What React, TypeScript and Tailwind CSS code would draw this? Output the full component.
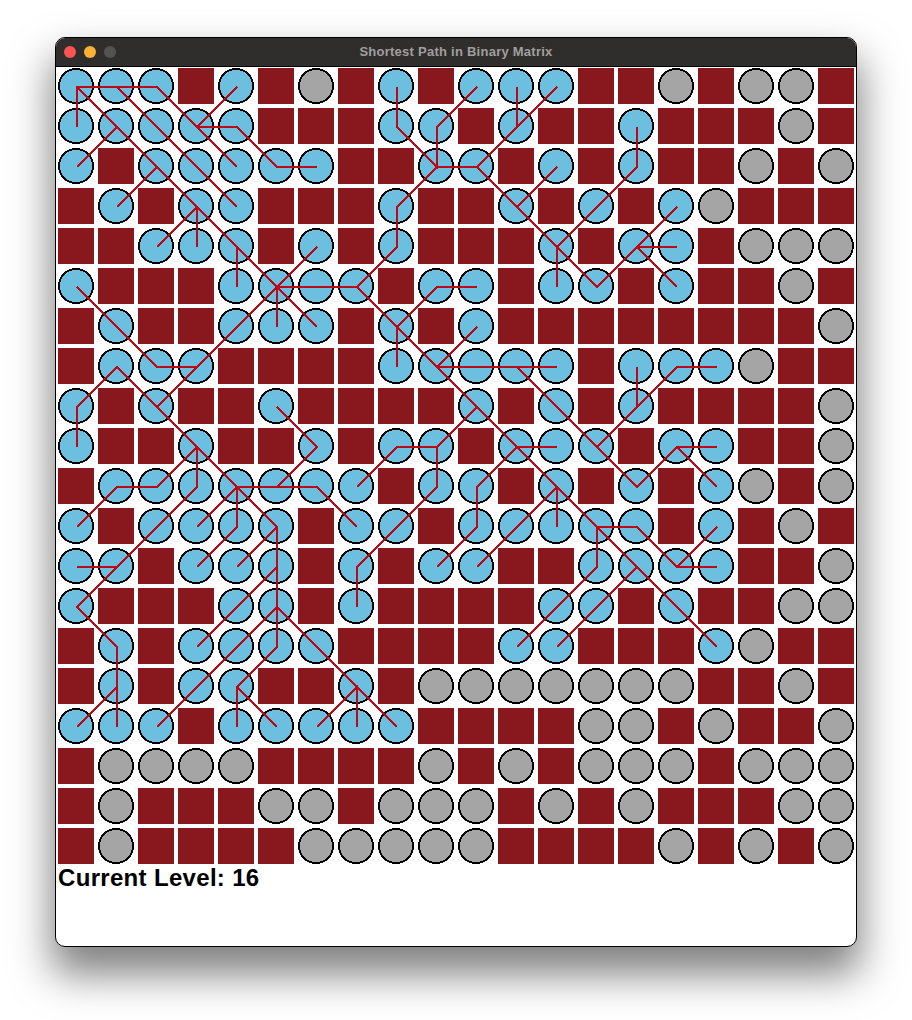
import React from "react";

const BOARD = [
  "BBBRBRGRBRBBBRRGRGGR",
  "BBBBBRRRBBRBRRBRRRGR",
  "BRBBBBBRRBBRBRBRRGRG",
  "RBRBBRRRBRRBRBRBGRRR",
  "RRBBBRBRBRRRBRBBRGGG",
  "BRRRBBBBRBBRBBRBRRGR",
  "RBRRBBBRBRBRRRRRRRRG",
  "RBBBRRRRBBBBBRBBBGRR",
  "BRBRRBRRRRBRBRBRRRRG",
  "BRRBRRBRBBRBBBRBBRRG",
  "RBBBBBBBRBBRBRBRBGRG",
  "BRBBBBRBBRBBBBBRBRGR",
  "BBRBBBRBRBBRRBBBBRRG",
  "BRRRBBRBRRRRBBRBRRGG",
  "RBRBBBBRRRRBBRRRBGRR",
  "RBRBBRRBRGGGGGGGRRGR",
  "BBBRBBBBBRRRRGGRGRRG",
  "RGGGGRRRRGRGRGGGRGGG",
  "RGRRRGGRGGGRGRGRRRGG",
  "RGRRRRGGGGGRRRRGRGRG",
];

const PATHS = [
  "0,1 0,0 2,0 4,2",
  "1,0 4,3",
  "3,1 4,0",
  "3,1 4,1 5,2 6,2",
  "0,2 1,1",
  "0,0 5,5",
  "1,3 2,2",
  "2,4 3,3",
  "3,3 3,4",
  "4,4 4,5",
  "5,5 6,4",
  "5,5 7,5",
  "5,5 5,6",
  "5,5 6,6",
  "5,5 3,7 2,7 0,5",
  "3,7 2,8",
  "0,9 0,8 1,7 3,9",
  "3,9 4,10",
  "3,9 2,10 1,10 0,11",
  "3,9 3,10 0,13 1,14 1,16",
  "0,16 1,15",
  "0,12 1,12",
  "4,10 6,10 7,11",
  "5,10 6,9 5,8",
  "3,11 4,10",
  "4,10 4,11 3,12",
  "4,10 5,11 4,12",
  "5,11 5,14 4,15 4,16",
  "4,15 5,16",
  "3,14 5,12",
  "2,16 5,13 8,16",
  "6,16 7,15 7,16",
  "7,5 8,4 8,3 9,2",
  "8,0 8,1 9,2 9,1 10,0",
  "9,2 10,2 11,1 12,0",
  "11,0 11,1",
  "10,2 12,4",
  "11,3 12,2",
  "12,4 14,2 14,1",
  "12,4 12,5",
  "12,4 13,5 15,3",
  "14,4 15,4",
  "14,4 15,5",
  "7,5 8,6 8,7",
  "8,6 9,5 10,5",
  "8,6 9,7 10,6",
  "9,7 12,7",
  "11,7 14,10 15,9 16,9",
  "15,9 16,10",
  "13,9 15,7 16,7",
  "14,8 14,7",
  "9,7 16,14",
  "10,8 9,9 8,9 7,10",
  "9,9 9,10 7,12 7,13",
  "11,9 12,9",
  "11,9 10,10 10,11 9,12",
  "12,10 12,11",
  "12,10 10,12",
  "13,11 14,11 15,12 16,12",
  "15,12 16,11",
  "13,11 13,12 11,14",
  "14,12 12,14",
];

function toPoints(path: string) {
  return path
    .split(" ")
    .map((p) => {
      const [c, r] = p.split(",").map(Number);
      return `${19 + 40 * c},${19 + 40 * r}`;
    })
    .join(" ");
}

function Cell({ kind }: { kind: string }) {
  if (kind === "R") return <div className="w-[36px] h-[36px] bg-[#89171e]" />;
  return (
    <svg width="36" height="36" viewBox="0 0 36 36" className="block" shapeRendering="crispEdges">
      <circle cx="18" cy="18" r="17" fill={kind === "B" ? "#6cbfdf" : "#a5a5a5"} stroke="#000" strokeWidth="2" />
    </svg>
  );
}

export default function App() {
  return (
    <div className="w-[912px] h-[1020px] bg-white overflow-hidden pt-[37px] pl-[55px]">
      <div className="w-[802px] h-[910px] rounded-[10px] border border-black bg-white shadow-[0_24px_40px_3px_rgba(0,0,0,0.5)] overflow-hidden flex flex-col">
        <div className="h-[29px] shrink-0 bg-[#302e2c] border-b border-black relative flex items-center justify-center">
          <div className="absolute left-[8px] top-[8px] flex gap-[8px]">
            <div className="w-[12px] h-[12px] rounded-full bg-[#fd5351]" />
            <div className="w-[12px] h-[12px] rounded-full bg-[#fbb133]" />
            <div className="w-[12px] h-[12px] rounded-full bg-[#545351]" />
          </div>
          <span className="text-[13px] font-bold tracking-[0.25px] text-[#a09f9e] font-['Liberation_Sans',Arial,sans-serif]">
            Shortest Path in Binary Matrix
          </span>
        </div>
        <div className="pl-[2px] pt-[1px]">
          <div className="relative w-[796px] grid grid-cols-[repeat(20,36px)] gap-[4px]">
            {BOARD.flatMap((row, r) =>
              row.split("").map((k, c) => <Cell key={`${r}-${c}`} kind={k} />)
            )}
            <svg
              width="800"
              height="800"
              viewBox="0 0 800 800"
              className="absolute left-0 top-0"
              shapeRendering="crispEdges"
            >
              {PATHS.map((p) => (
                <polyline key={p} points={toPoints(p)} fill="none" stroke="#b90a1a" strokeWidth="2.4" />
              ))}
            </svg>
          </div>
          <div className="text-[24px] leading-[28px] font-bold text-black tracking-[0.32px] font-['Liberation_Sans',Arial,sans-serif]">
            Current Level: 16
          </div>
        </div>
      </div>
    </div>
  );
}
